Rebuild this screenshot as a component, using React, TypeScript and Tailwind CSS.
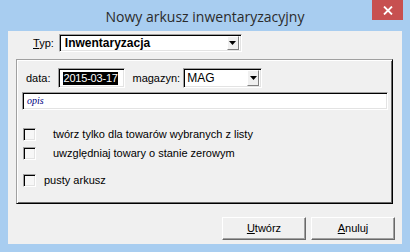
import React from "react";

const sunken =
  "border border-t-[#a0a0a0] border-l-[#a0a0a0] border-r-[#ffffff] border-b-[#ffffff] shadow-[inset_1px_1px_0_#000000,inset_-1px_-1px_0_#e3e3e3]";

function Arrow() {
  return (
    <div className="w-[12px] h-full bg-[#f0f0f0] border border-t-[#ffffff] border-l-[#ffffff] border-r-[#808080] border-b-[#808080] flex items-center justify-center">
      <svg width="7" height="4" viewBox="0 0 7 4">
        <path d="M0 0h7L3.5 4z" fill="#000" />
      </svg>
    </div>
  );
}

function Check({ label, ml }: { label: string; ml: string }) {
  return (
    <div className="flex items-center h-[13px]">
      <div className={`w-[13px] h-[13px] bg-[#f7f7f7] ${sunken}`} />
      <span className={`${ml} text-[11px] text-black leading-none whitespace-nowrap`}>{label}</span>
    </div>
  );
}

export default function App() {
  return (
    <div
      className="w-[410px] h-[252px] bg-[#a8cdf0] flex flex-col"
      style={{ fontFamily: '"Liberation Sans", Arial, sans-serif' }}
    >
      <div className="h-[31px] relative flex items-center justify-center shrink-0">
        <span
          className="text-[14px] text-[#2b2b2b] pt-[1px] whitespace-nowrap"
          style={{ fontFamily: '"Open Sans", "Liberation Sans", sans-serif' }}
        >
          Nowy arkusz inwentaryzacyjny
        </span>
        <div className="absolute right-[7px] top-0 w-[31px] h-[20px] bg-[#c75050] flex items-center justify-center">
          <svg width="10" height="9" viewBox="0 0 10 9">
            <path d="M1 0.5L9 8.5M9 0.5L1 8.5" stroke="#fff" strokeWidth="1.8" />
          </svg>
        </div>
      </div>
      <div className="flex-1 mx-[8px] mb-[8px] bg-[#f0f0f0] flex flex-col">
        {/* Typ row */}
        <div className="flex items-center mt-[3px] h-[18px]">
          <span className="ml-[25px] text-[11px] text-black leading-none">
            <span className="underline">T</span>yp:
          </span>
          <div className={`ml-[5px] w-[183px] h-[18px] bg-white flex items-center ${sunken} px-[2px]`}>
            <span className="flex-1 pl-[3px] text-[12px] font-bold text-black leading-none">Inwentaryzacja</span>
            <div className="h-[14px]"><Arrow /></div>
          </div>
        </div>
        {/* Group box */}
        <div className="ml-[8px] mt-[7px] w-[377px] h-[145px] border border-t-[#a0a0a0] border-l-[#a0a0a0] border-r-[#000] border-b-[#000] shadow-[inset_1px_1px_0_#ffffff,inset_-1px_-1px_0_#696969] flex flex-col">
          <div className="flex items-center mt-[8px] h-[20px]">
            <span className="ml-[9px] text-[11px] text-[#000] leading-none">data:</span>
            <div className={`ml-[8px] w-[67px] h-[20px] bg-white flex items-center ${sunken}`}>
              <span className="ml-[4px] bg-black text-white text-[11px] leading-[13px] whitespace-nowrap tracking-[-0.2px]">2015-03-17</span>
            </div>
            <span className="ml-[7px] text-[11px] text-black leading-none">magazyn:</span>
            <div className={`ml-[3px] w-[79px] h-[20px] bg-white flex items-center ${sunken} px-[2px]`}>
              <span className="flex-1 pl-[1px] text-[12px] text-black leading-none">MAG</span>
              <div className="h-[16px]"><Arrow /></div>
            </div>
          </div>
          <div className={`ml-[5px] mt-[4px] w-[366px] h-[18px] bg-white flex items-center ${sunken}`}>
            <span
              className="ml-[4px] text-[10px] italic text-[#000080] leading-none"
              style={{ fontFamily: '"Liberation Serif", serif' }}
            >
              opis
            </span>
          </div>
          <div className="ml-[6px] mt-[18px] flex flex-col">
            <Check label="twórz tylko dla towarów wybranych z listy" ml="ml-[17px]" />
            <div className="h-[6px]" />
            <Check label="uwzględniaj towary o stanie zerowym" ml="ml-[17px]" />
            <div className="h-[14px]" />
            <Check label="pusty arkusz" ml="ml-[8px]" />
          </div>
        </div>
        {/* Buttons */}
        <div className="flex justify-end gap-[5px] mr-[7px] mt-[13px]">
          {["Utwórz", "Anuluj"].map((t) => (
            <div
              key={t}
              className="w-[84px] h-[23px] bg-[#f0f0f0] border border-t-[#ffffff] border-l-[#ffffff] border-r-[#696969] border-b-[#696969] shadow-[inset_-1px_-1px_0_#a0a0a0] flex items-center justify-center text-[11px] text-black leading-none"
            >
              <span className="underline">{t[0]}</span>
              {t.slice(1)}
            </div>
          ))}
        </div>
      </div>
    </div>
  );
}
